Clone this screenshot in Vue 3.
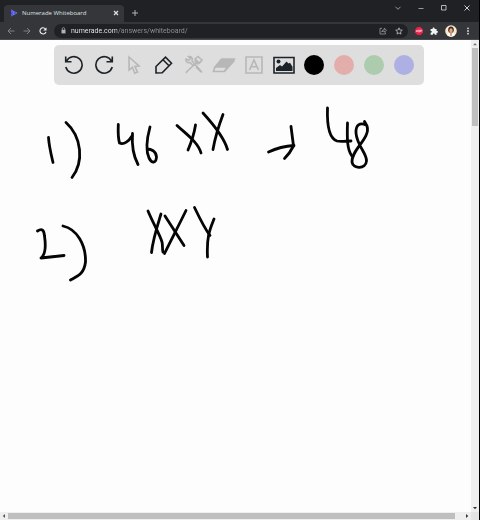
<script setup>
import { ref } from 'vue'

const url = ref('numerade.com/answers/whiteboard/')
const colors = [
  { name: 'Black', value: '#000000' },
  { name: 'Red', value: '#e3adab' },
  { name: 'Green', value: '#adcbad' },
  { name: 'Blue', value: '#aeafe3' },
]
const strokes = [
  'M48.5 137.5C49 146 51 154 53 162.5',
  'M66 122.5C82 137 84 162 72 177.5',
  'M118.3 124.5C118 132 118 138 119.5 143C124 145 129 141 132 136',
  'M132.5 133.5C131.5 147 134 157 138 164.5',
  'M150 127C147 138 145.5 150 149 158C152 164 156 163 156.5 157C156 151 151 149 147 149',
  'M177 125.5C186 134 198 142 201 153',
  'M195.5 125C194 135 191 143 188 150',
  'M203 113C213 124 224 137 227.5 149.5',
  'M223 114.5C219 125 215 138 213 149.5',
  'M268.5 152C277 148 286 146 294 145.5',
  'M291 126.5L293.5 146C291 151 288 155 284.5 158.5',
  'M327.5 108C327 122 328 138 337 141C341 142 346 141 351 141',
  'M347.5 123C347 138 347 150 352 156',
  'M364.5 121.5L367 126C371 138 351 150 352 162C353 169.5 366 169 366.5 161C367 153 357 146 356 133C355.5 125 360 122 366 125',
  'M37.5 231C42 228 44 230 44.5 236C46 246 46 254 41 258L64 255.5',
  'M63 226C77 229 86 245 85.5 262C84 274 78 276 70.5 280',
  'M148 211C153 223 160 235 162 242C163 246 162 249 163 252',
  'M161 214C157 227 153 239 151.5 252.5',
  'M165 216L184 245.5',
  'M186 210.5C179 225 170 242 164.5 253.5',
  'M194.5 207.5C200 219 205 229 210 235.5',
  'M214 219C210 229 206.5 236 207.5 257',
]
</script>

<template>
  <div class="window">
    <header class="tabs">
      <div class="tab">
        <svg class="logo" viewBox="0 0 8 8"><path d="M1 .8v6.400L7.200 4z" fill="#4147c9" /><path d="M1 .8L7.200 4 1 7.200M1 2.500L4.500 4 1 5.500M3.500 2v4" fill="none" stroke="#7d86ff" stroke-width=".8" stroke-dasharray="1 .4" /></svg>
        <span class="title">Numerade Whiteboard</span>
        <button class="icon" aria-label="Close tab"><svg viewBox="0 0 6 6"><path d="M1.500 1.500l3 3M4.500 1.500L1.500 4.500" stroke="#dee1e6" stroke-width=".9" /></svg></button>
      </div>
      <button class="icon plus" aria-label="New tab"><svg viewBox="0 0 8 8"><path d="M4 1v6M1 4h6" stroke="#bdc1c6" stroke-width=".9" /></svg></button>
      <div class="controls">
        <button class="icon" aria-label="Search tabs"><svg viewBox="0 0 8 8"><path d="M1.500 2.800L4 5.300l2.500-2.500" fill="none" stroke="#b4b7bb" stroke-width=".8" /></svg></button>
        <button class="icon" aria-label="Minimize"><svg viewBox="0 0 8 8"><path d="M1.500 4.500h5" stroke="#b4b7bb" stroke-width=".8" /></svg></button>
        <button class="icon" aria-label="Maximize"><svg viewBox="0 0 8 8"><path d="M1.500 1.500h4.500v4.500h-4.500z" fill="none" stroke="#c4c7ca" stroke-width=".9" /></svg></button>
        <button class="icon" aria-label="Close"><svg viewBox="0 0 8 8"><path d="M1.500 1.500l5 5M6.500 1.500l-5 5" stroke="#e1e3e5" stroke-width=".9" /></svg></button>
      </div>
    </header>

    <nav class="navbar">
      <div class="history">
        <button class="icon" aria-label="Back"><svg viewBox="0 0 8 8"><path d="M7.500 4H1M4 1L1 4l3 3" fill="none" stroke="#85888c" stroke-width=".9" /></svg></button>
        <button class="icon" aria-label="Forward"><svg viewBox="0 0 8 8"><path d="M.5 4H7M4 1l3 3-3 3" fill="none" stroke="#85888c" stroke-width=".9" /></svg></button>
        <button class="icon" aria-label="Reload"><svg viewBox="0 0 8 8"><path d="M6.500 2A3.100 3.100 0 1 0 7 4.800" fill="none" stroke="#f1f3f4" stroke-width="1.100" /><path d="M7.500.4v3.200H4.300z" fill="#f1f3f4" /></svg></button>
      </div>
      <label class="omnibox">
        <svg class="lock" viewBox="0 0 5 7"><path d="M.5 2.800h4v3.600h-4z" fill="#b0b3b7" /><path d="M1.300 3V1.800a1.200 1.200 0 0 1 2.400 0V3" fill="none" stroke="#b0b3b7" stroke-width=".7" /></svg>
        <input v-model="url" class="url" type="text" aria-label="Address" />
        <button class="icon" aria-label="Share"><svg viewBox="0 0 8 8"><path d="M3 1.300H1v5.700h5.500V5.500M2.800 5C3 3.400 4 2.800 5.300 2.800V1.200L7.500 3.300 5.300 5.200V4C4.200 4 3.400 4.200 2.800 5z" fill="none" stroke="#a8abaf" stroke-width=".7" /></svg></button>
        <button class="icon" aria-label="Bookmark"><svg viewBox="0 0 8 8"><path d="M4 .8l.9 2.200 2.400.2-1.800 1.600.5 2.300-2-1.200-2 1.200.5-2.300L.7 3.200l2.400-.2z" fill="none" stroke="#c0c3c7" stroke-width=".8" /></svg></button>
      </label>
      <button class="icon" aria-label="Ad blocker"><svg viewBox="0 0 8 8"><path d="M2.400 0h3.200L8 2.400v3.200L5.600 8H2.400L0 5.600V2.400z" fill="#ed2049" /><path d="M1.300 5l.6-2 .6 2M3.300 3v2h1.200V3zM5.500 5V3h1.200v1.200H5.500" fill="none" stroke="#fff" stroke-width=".5" /></svg></button>
      <button class="icon" aria-label="Extensions"><svg viewBox="0 0 8 8"><path d="M.6 2h2c-.4-2 2.400-2 2 0h2v2c1.800-.4 1.800 2.200 0 1.800v1.900H4.700c.3-1.700-2-1.700-1.800 0H.6V5.700c1.600.2 1.600-2 0-1.800z" fill="#f1f3f4" /></svg></button>
      <button class="icon avatar" aria-label="Profile"><svg viewBox="0 0 12 12"><circle cx="6" cy="6" r="5.800" fill="#f8e9d4" /><path d="M2 10c1-2 2.500-2 4-2s3 0 4 2c-2 2.300-6 2.300-8 0z" fill="#fff" /><path d="M3.200 5.500c-.8-5.500 6.400-5.500 5.600 0L8 7.500H4z" fill="#3c2923" /><ellipse cx="6" cy="5.600" rx="1.700" ry="2.400" fill="#e5a77b" /><path d="M5 7.600h2L6.700 11H5.300z" fill="#d99061" /></svg></button>
      <button class="icon" aria-label="Menu"><svg viewBox="0 0 8 8"><g fill="#dcdee1"><circle cx="4" cy="1.300" r=".9" /><circle cx="4" cy="4" r=".9" /><circle cx="4" cy="6.700" r=".9" /></g></svg></button>
    </nav>

    <div class="view">
      <main class="board">
        <svg class="ink" viewBox="0 40 471 472" aria-label="Whiteboard drawing"><path v-for="(d, i) in strokes" :key="i" :d="d" /></svg>
        <div class="tools">
          <button class="tool" aria-label="Undo"><svg viewBox="0 0 20 20"><path d="M2.500 6A8.300 8.300 0 1 1 1.800 12M1.700 1.500V6.700H7.500" /></svg></button>
          <button class="tool" aria-label="Redo"><svg viewBox="0 0 20 20"><path d="M17.500 6A8.300 8.300 0 1 0 18.200 12M18.300 1.500V6.700H12.500" /></svg></button>
          <button class="tool pale" aria-label="Select"><svg viewBox="0 0 20 20"><path d="M5 2l.1 13 3.200-2.700 2.500 6 2.700-1.200-2.600-5.700 4.100-.5z" /></svg></button>
          <button class="tool" aria-label="Pen"><svg viewBox="0 0 20 20"><path d="M2 18v-6.500L11.500 2.200l6 6L8.200 17.700zM9 4.700l6 6" /></svg></button>
          <button class="tool pale" aria-label="Settings"><svg viewBox="0 0 20 20"><path d="M2 3.500l2.500 2 2-2L4.700 1.600C7.400 1.300 9.300 3.500 8 6L16.500 15.500 18 17.500M2 3.500C1.300 6.500 3.500 8.500 6 7.500L9 10.500M12 8L3 16.500M3 16.500l-1 1.500M11 4l3-2.500 4 3.500-2.500 3zM10.500 5.500l4 4M12 12l5 5" /></svg></button>
          <button class="tool pale" aria-label="Eraser"><svg viewBox="0 0 24 20"><path d="M9.500 4h12.500L15 12H3z" fill="#b6b8b7" /><path d="M3 12L1.500 16.500H12.500L22 6V4M12.500 16.500L15 12" /></svg></button>
          <button class="tool pale" aria-label="Text"><svg viewBox="0 0 20 20"><path d="M2 2h16v16H2zM5.500 15L10 5l4.500 10M7 11.800h6" /></svg></button>
          <button class="tool" aria-label="Image"><svg viewBox="0 0 24 20"><path d="M2 2.500h20v15.500H2z" /><circle cx="6.500" cy="6.500" r="2" class="solid" /><path class="solid" d="M4 16v-3l4-3 2 1.500 4.500-5 2 2 1.500-.8 2.500 4V16z" /></svg></button>
          <button v-for="c in colors" :key="c.name" class="tool" :aria-label="c.name"><span class="dot" :style="{ background: c.value }"></span></button>
        </div>
      </main>
      <div class="bar vertical">
        <button class="icon" aria-label="Scroll up"><svg viewBox="0 0 8 8"><path d="M2 5.200L4 3l2 2.200z" fill="#777" /></svg></button>
        <div class="thumb"></div>
        <button class="icon end" aria-label="Scroll down"><svg viewBox="0 0 8 8"><path d="M2 3L4 5.200 6 3z" fill="#333" /></svg></button>
      </div>
      <div class="bar horizontal">
        <button class="icon" aria-label="Scroll left"><svg viewBox="0 0 8 8"><path d="M5 2L2.800 4 5 6z" fill="#555" /></svg></button>
        <div class="thumb"></div>
        <button class="icon end" aria-label="Scroll right"><svg viewBox="0 0 8 8"><path d="M3 2l2.200 2L3 6z" fill="#333" /></svg></button>
      </div>
      <div class="corner"></div>
    </div>
  </div>
</template>

<style>
body {
  margin: 0;
}
</style>

<style scoped>
.window {
  box-sizing: border-box;
  display: flex;
  flex-direction: column;
  min-height: 100vh;
  border-right: 1px solid #000;
  background: #fdfdfd;
  font-family: "Open Sans", "Noto Sans", sans-serif;
}
button {
  display: flex;
  align-items: center;
  justify-content: center;
  padding: 0;
  border: 0;
  background: none;
}
svg {
  display: block;
}
.icon {
  flex: none;
  width: 8px;
  height: 8px;
}
.icon svg {
  width: 100%;
  height: 100%;
}
.tabs {
  display: flex;
  height: 22px;
  background: #202124;
}
.tab {
  box-sizing: border-box;
  display: flex;
  align-items: center;
  gap: 4px;
  width: 120px;
  height: 17px;
  margin: 5px 0 0 4px;
  padding: 0 4px 1px 6px;
  border-radius: 4px 4px 0 0;
  background: #35363a;
}
.logo {
  width: 8px;
  height: 8px;
}
.title {
  flex: 1;
  color: #dfe1e4;
  font-size: 6px;
  line-height: 8px;
  white-space: nowrap;
}
.plus {
  margin: 9px 0 0 7px;
}
.controls {
  display: flex;
  gap: 15px;
  margin: 4px 8px 0 auto;
}
.navbar {
  box-sizing: border-box;
  display: flex;
  align-items: center;
  gap: 7px;
  height: 18px;
  padding: 0 7px;
  border-bottom: 1px solid #4a4b4f;
  background: #35363a;
}
.history {
  display: flex;
  gap: 8px;
}
.omnibox {
  display: flex;
  flex: 1;
  align-items: center;
  gap: 8px;
  height: 14px;
  padding: 0 5px 0 7px;
  border-radius: 7px;
  background: #202124;
}
.lock {
  width: 5px;
  height: 7px;
  margin-right: -3px;
}
.url {
  flex: 1;
  min-width: 0;
  height: 12px;
  padding: 0;
  border: 0;
  outline: 0;
  color: transparent;
  background: linear-gradient(90deg, #f1f3f4 46px, #8f9397 46px);
  background-clip: text;
  font-family: Roboto, sans-serif;
  font-size: 7px;
  line-height: 12px;
}
.avatar {
  width: 12px;
  height: 12px;
}
.view {
  display: grid;
  flex: 1;
  grid-template-columns: 1fr 8px;
  grid-template-rows: 1fr 8px;
}
.board {
  position: relative;
  padding: 5px 47px 0 54px;
}
.ink {
  position: absolute;
  inset: 0;
  width: 100%;
  height: 100%;
  fill: none;
  stroke: #050505;
  stroke-width: 2.8;
  stroke-linecap: round;
  stroke-linejoin: round;
}
.tools {
  position: relative;
  display: flex;
  align-items: center;
  justify-content: space-between;
  height: 40px;
  padding: 0 8px;
  border-radius: 5px;
  background: #dedede;
}
.tool {
  width: 24px;
  height: 24px;
}
.tool svg {
  height: 20px;
  fill: none;
  stroke: #1c2328;
  stroke-width: 1.6;
}
.pale svg {
  stroke: #b6b8b7;
}
.solid {
  fill: #1c2328;
  stroke: none;
}
.dot {
  width: 20px;
  height: 20px;
  border-radius: 50%;
}
.bar {
  display: flex;
  background: #efefef;
}
.vertical {
  flex-direction: column;
}
.thumb {
  background: #bfbfbf;
}
.vertical .thumb {
  height: 16.5%;
  margin: 0 1px;
}
.horizontal .thumb {
  width: 95%;
  margin: 1px 0;
}
.vertical .end {
  margin-top: auto;
}
.horizontal .end {
  margin-left: auto;
}
.corner {
  background: #e4e4e4;
}
</style>
